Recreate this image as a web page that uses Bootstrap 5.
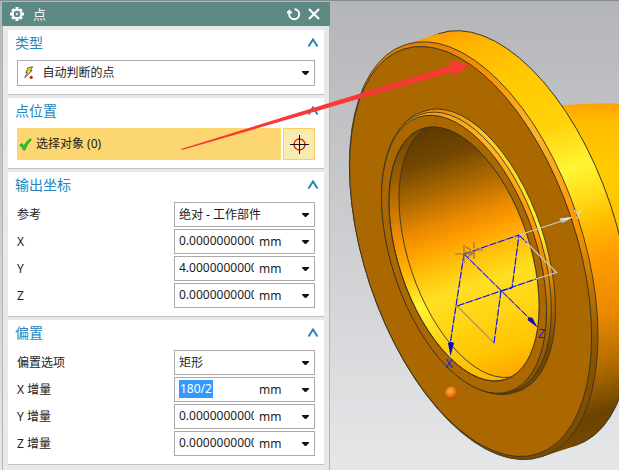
<!DOCTYPE html>
<html lang="zh-CN">
<head>
<meta charset="utf-8">
<meta name="viewport" content="width=device-width, initial-scale=1">
<title>点</title>
<link rel="stylesheet" href="https://cdn.jsdelivr.net/npm/bootstrap@5.3.0/dist/css/bootstrap.min.css">
<style>
  body {
    font: 12px/18px "Noto Sans", "Noto Sans CJK SC", sans-serif;
    color: #1c1c1c;
    background: linear-gradient(#b4b5b8, #e6e7e9);
  }
  .workspace { border-top: 1px solid #858d94; padding: 1px 0 0 2px; }
  .dialog-panel { flex: 0 0 328px; background: #e8e8e8; }
  .panel-inner { border: solid #b4b4b4; border-width: 0 1px; padding: 4px 5px 4px; }
  .title-strip { background: #5c8a83; height: 24px; padding: 0 10px 0 7px; font-size: 13px; color: #f2f6f5; }
  .section-box { background: #fff; border-bottom: 1px solid #c2c2c2; padding: 0 9px 8px; margin-bottom: 3px; }
  .section-head { height: 30px; padding-bottom: 4px; margin: 0 -4px 0 -2px; }
  .section-head h2 { font-size: 14px; line-height: 20px; font-weight: 400; color: #2585b8; }
  .section-rows { display: grid; gap: 2px; }
  .param-row { display: grid; grid-template-columns: minmax(0, 1fr) 141px; align-items: center; }
  .field-box { height: 25px; border: 1px solid #aaa; background: #fff; }
  .field-box select {
    height: 23px; line-height: 18px; padding: 0 20px 0 4px; font-size: 12px; color: #1c1c1c; border-radius: 0;
    background: transparent url("data:image/svg+xml,%3Csvg xmlns='http://www.w3.org/2000/svg' viewBox='0 0 7 4'%3E%3Cpath d='M0 0h7v1L4 4H3L0 1z' fill='%23111'/%3E%3C/svg%3E") no-repeat right 5px center / 7px 4px;
  }
  .field-box input {
    width: 75px; height: 18px; margin: 2px 5px 3px 4px; padding: 0; font-size: 12px; line-height: 18px; color: #1c1c1c; border-radius: 0;
  }
  .field-box input.picked { width: 34px; margin-right: 46px; background: #3399ff; color: #fff; border-left: 1px solid #d87020 !important; }
  .arrow-btn { width: 17px; line-height: 1; }
  .type-field { height: 26px; padding-left: 6px; }
  .type-field select { padding-left: 8px; }
  .pick-row { gap: 2px; }
  .pick-btn { height: 32px; background: #fbd671; padding: 0 2px; color: #1c1c1c; }
  .target-btn { width: 32px; height: 32px; background: #f9ebb0; border: 1px solid #fbd060 !important; }
  .pointer-arrow { top: 0; left: 0; pointer-events: none; }
  .view-area { margin-top: -2px; min-width: 0; overflow: hidden; }
</style>
<script src="https://cdn.jsdelivr.net/npm/bootstrap@5.3.0/dist/js/bootstrap.bundle.min.js"></script>
</head>
<body>
<main class="workspace d-flex min-vh-100 position-relative overflow-hidden">
  <form class="dialog-panel" aria-label="点">
    <header class="title-strip d-flex align-items-center">
      <svg width="16" height="16" viewBox="0 0 16 16" aria-hidden="true">
        <g stroke="#fff" stroke-width="3"><path d="M8 1v14M1 8h14M3.2 3.2l9.6 9.6M12.8 3.2l-9.6 9.6"/></g>
        <circle cx="8" cy="8" r="5.2" fill="#fff"/><circle cx="8" cy="8" r="3.3" fill="#5c8a83"/><circle cx="8" cy="8" r="1.2" fill="#dfe9e7"/>
      </svg>
      <span class="ms-2 flex-grow-1">点</span>
      <button type="button" class="btn p-0 border-0 d-flex me-2" aria-label="重置">
        <svg width="13" height="14" viewBox="0 0 13 14" fill="none" stroke="#fff" stroke-width="1.900"><path d="M7.500 2.200A5 5 0 1 1 2.200 7.500V5M0 6.200l2.300-2.300 2.400 2.300"/></svg>
      </button>
      <button type="button" class="btn p-0 border-0 d-flex" aria-label="关闭">
        <svg width="12" height="12" viewBox="0 0 12 12" stroke="#fff" stroke-width="2.200"><path d="M1 1l10 10M11 1L1 11"/></svg>
      </button>
    </header>

    <div class="panel-inner">
      <section class="section-box">
        <div class="section-head d-flex align-items-center justify-content-between">
          <h2 class="m-0">类型</h2>
          <button type="button" class="btn p-0 border-0 d-flex" aria-label="折叠类型"><svg width="12" height="10" viewBox="0 0 12 10" fill="none" stroke="#2585b8" stroke-width="2"><path d="M1.500 8.500L6 1.500l4.500 7"/></svg></button>
        </div>
        <div class="field-box type-field d-flex align-items-center">
          <svg width="11" height="14" viewBox="0 0 11 14" aria-hidden="true"><path d="M4 1.500L9 .5 6.500 4.500H8.500L.8 12 3.300 6.500H2z" fill="#e8d52a" stroke="#555" stroke-width=".9"/><circle cx="7.500" cy="11.500" r="1.700" fill="#e01818"/></svg>
          <select class="form-select border-0 shadow-none flex-grow-1" aria-label="类型"><option>自动判断的点</option></select>
        </div>
      </section>

      <section class="section-box">
        <div class="section-head d-flex align-items-center justify-content-between">
          <h2 class="m-0">点位置</h2>
          <button type="button" class="btn p-0 border-0 d-flex" aria-label="折叠点位置"><svg width="12" height="10" viewBox="0 0 12 10" fill="none" stroke="#2585b8" stroke-width="2"><path d="M1.500 8.500L6 1.500l4.500 7"/></svg></button>
        </div>
        <div class="pick-row d-flex">
          <button type="button" class="pick-btn border-0 flex-grow-1 d-flex align-items-center">
            <svg width="13" height="13" viewBox="0 0 13 13" aria-hidden="true"><path d="M.8 7l2-1.500L5 8.200C6.500 5 8.500 2.500 11.500.8l.8 1C9.500 4.500 7.500 8 6 12H4.500C3.500 10 2.500 8.500.8 7z" fill="#25c92e" stroke="#119a1b" stroke-width=".8"/></svg>
            <span class="ms-1">选择对象 (0)</span>
          </button>
          <button type="button" class="target-btn p-0 d-flex align-items-center justify-content-center" aria-label="点对话框">
            <svg width="20" height="20" viewBox="0 0 20 20" fill="none"><circle cx="10.500" cy="10.500" r="5.500" stroke="#d81414" stroke-width="1.300"/><path d="M10.500 1v19M1 10.500h19" stroke="#111"/></svg>
          </button>
        </div>
      </section>

      <section class="section-box">
        <div class="section-head d-flex align-items-center justify-content-between">
          <h2 class="m-0">输出坐标</h2>
          <button type="button" class="btn p-0 border-0 d-flex" aria-label="折叠输出坐标"><svg width="12" height="10" viewBox="0 0 12 10" fill="none" stroke="#2585b8" stroke-width="2"><path d="M1.500 8.500L6 1.500l4.500 7"/></svg></button>
        </div>
        <div class="section-rows">
          <div class="param-row"><label for="ref">参考</label><div class="field-box"><select id="ref" class="form-select border-0 shadow-none"><option>绝对 - 工作部件</option></select></div></div>
          <div class="param-row"><label for="cx">X</label><div class="field-box d-flex align-items-center"><input id="cx" type="text" class="border-0" value="0.000000000000"><span class="flex-grow-1">mm</span><button type="button" class="btn border-0 p-0 arrow-btn" aria-label="X 选项"><svg class="d-block mx-auto" width="7" height="4"><path d="M0 0h7v1L4 4H3L0 1z" fill="#111"/></svg></button></div></div>
          <div class="param-row"><label for="cy">Y</label><div class="field-box d-flex align-items-center"><input id="cy" type="text" class="border-0" value="4.000000000000"><span class="flex-grow-1">mm</span><button type="button" class="btn border-0 p-0 arrow-btn" aria-label="Y 选项"><svg class="d-block mx-auto" width="7" height="4"><path d="M0 0h7v1L4 4H3L0 1z" fill="#111"/></svg></button></div></div>
          <div class="param-row"><label for="cz">Z</label><div class="field-box d-flex align-items-center"><input id="cz" type="text" class="border-0" value="0.000000000000"><span class="flex-grow-1">mm</span><button type="button" class="btn border-0 p-0 arrow-btn" aria-label="Z 选项"><svg class="d-block mx-auto" width="7" height="4"><path d="M0 0h7v1L4 4H3L0 1z" fill="#111"/></svg></button></div></div>
        </div>
      </section>

      <section class="section-box">
        <div class="section-head d-flex align-items-center justify-content-between">
          <h2 class="m-0">偏置</h2>
          <button type="button" class="btn p-0 border-0 d-flex" aria-label="折叠偏置"><svg width="12" height="10" viewBox="0 0 12 10" fill="none" stroke="#2585b8" stroke-width="2"><path d="M1.500 8.500L6 1.500l4.500 7"/></svg></button>
        </div>
        <div class="section-rows">
          <div class="param-row"><label for="off">偏置选项</label><div class="field-box"><select id="off" class="form-select border-0 shadow-none"><option>矩形</option></select></div></div>
          <div class="param-row"><label for="dx">X 增量</label><div class="field-box d-flex align-items-center"><input id="dx" type="text" class="border-0 picked" value="180/2"><span class="flex-grow-1">mm</span><button type="button" class="btn border-0 p-0 arrow-btn" aria-label="X 增量选项"><svg class="d-block mx-auto" width="7" height="4"><path d="M0 0h7v1L4 4H3L0 1z" fill="#111"/></svg></button></div></div>
          <div class="param-row"><label for="dy">Y 增量</label><div class="field-box d-flex align-items-center"><input id="dy" type="text" class="border-0" value="0.000000000000"><span class="flex-grow-1">mm</span><button type="button" class="btn border-0 p-0 arrow-btn" aria-label="Y 增量选项"><svg class="d-block mx-auto" width="7" height="4"><path d="M0 0h7v1L4 4H3L0 1z" fill="#111"/></svg></button></div></div>
          <div class="param-row"><label for="dz">Z 增量</label><div class="field-box d-flex align-items-center"><input id="dz" type="text" class="border-0" value="0.000000000000"><span class="flex-grow-1">mm</span><button type="button" class="btn border-0 p-0 arrow-btn" aria-label="Z 增量选项"><svg class="d-block mx-auto" width="7" height="4"><path d="M0 0h7v1L4 4H3L0 1z" fill="#111"/></svg></button></div></div>
        </div>
      </section>
    </div>
  </form>

  <div class="view-area flex-grow-1">
    <svg class="d-block" width="100%" height="470" viewBox="330 0 289 470" preserveAspectRatio="xMinYMin slice" role="img" aria-label="法兰模型">
      <defs>
        <linearGradient id="rim" gradientUnits="userSpaceOnUse" x1="0" y1="0" x2="221" y2="665">
          <stop offset=".24" stop-color="#ff9c00"/><stop offset=".27" stop-color="#ffb400"/><stop offset=".33" stop-color="#ffc800"/><stop offset=".42" stop-color="#ffd20a"/><stop offset=".485" stop-color="#fff535"/><stop offset=".53" stop-color="#ffdc18"/><stop offset=".565" stop-color="#ffc000"/><stop offset=".62" stop-color="#ff9c00"/><stop offset=".7" stop-color="#e88800"/><stop offset=".77" stop-color="#b06a00"/><stop offset=".83" stop-color="#6b4200"/><stop offset=".86" stop-color="#744800"/><stop offset=".88" stop-color="#b06c00"/>
        </linearGradient>
        <linearGradient id="chamfer" gradientUnits="userSpaceOnUse" x1="0" y1="0" x2="221" y2="665">
          <stop offset=".25" stop-color="#e08400"/><stop offset=".31" stop-color="#f39000"/><stop offset=".41" stop-color="#ffb425"/><stop offset=".49" stop-color="#ffa614"/><stop offset=".57" stop-color="#fb9500"/><stop offset=".66" stop-color="#bc7200"/><stop offset=".74" stop-color="#8a5500"/><stop offset=".86" stop-color="#7a4a00"/>
        </linearGradient>
        <linearGradient id="boss" gradientUnits="userSpaceOnUse" x1="0" y1="0" x2="221" y2="665">
          <stop offset=".34" stop-color="#e28a08"/><stop offset=".4" stop-color="#ffc820"/><stop offset=".5" stop-color="#ffe322"/><stop offset=".56" stop-color="#fff035"/><stop offset=".6" stop-color="#ffb010"/><stop offset=".65" stop-color="#b87000"/><stop offset=".72" stop-color="#744600"/>
        </linearGradient>
        <linearGradient id="bore" gradientUnits="userSpaceOnUse" x1="0" y1="0" x2="221" y2="665">
          <stop offset=".37" stop-color="#603b00"/><stop offset=".41" stop-color="#704600"/><stop offset=".46" stop-color="#b06a00"/><stop offset=".505" stop-color="#ee8c00"/><stop offset=".53" stop-color="#ff9f00"/><stop offset=".565" stop-color="#ffc40c"/><stop offset=".6" stop-color="#ffdf22"/><stop offset=".65" stop-color="#ffd412"/><stop offset=".7" stop-color="#ffc400"/><stop offset=".75" stop-color="#ff9e00"/>
        </linearGradient>
        <linearGradient id="lip" gradientUnits="userSpaceOnUse" x1="0" y1="0" x2="221" y2="665">
          <stop offset=".36" stop-color="#704600"/><stop offset=".42" stop-color="#9a5e00"/><stop offset=".5" stop-color="#f08c00"/><stop offset=".55" stop-color="#ffb400"/><stop offset=".605" stop-color="#fff535"/><stop offset=".66" stop-color="#ffd410"/><stop offset=".74" stop-color="#ffb400"/>
        </linearGradient>
        <linearGradient id="pipe" x1="0" y1="0" x2="0" y2="1">
          <stop offset="0" stop-color="#ffa200"/><stop offset=".12" stop-color="#ffbc00"/><stop offset=".5" stop-color="#ffcc00"/><stop offset="1" stop-color="#ffc000"/>
        </linearGradient>
        <radialGradient id="ball" cx=".4" cy=".35" r=".65"><stop offset="0" stop-color="#ffb050"/><stop offset=".5" stop-color="#ef7d10"/><stop offset="1" stop-color="#a84e00"/></radialGradient>
        <linearGradient id="cone" x1="0" y1="0" x2="0" y2="1"><stop offset="0" stop-color="#fff"/><stop offset="1" stop-color="#999"/></linearGradient>
        <path id="boreEdge" d="M422.300 128.700A65.700 132 -18.400 1 1 505.700 379.300A65.700 132 -18.400 1 1 422.300 128.700z"/>
        <clipPath id="inBore"><use href="#boreEdge"/></clipPath>
        <clipPath id="edgeZone"><path d="M535 70H900V400H535z"/></clipPath>
      </defs>
      <path d="M550 105.500L598 103.500H900V240H550z" fill="url(#pipe)"/>
      <g fill="url(#rim)">
        <path d="M438.500 33.700A108.500 217 -18.400 1 1 575.500 445.500A108.500 217 -18.400 1 1 438.500 33.700z" stroke="#3b3424"/>
        <path d="M405.200 44.700L438.500 33.400 575.500 445.800 542.200 456.700z"/>
      </g>
      <ellipse rx="108.500" ry="217" transform="translate(505 240.300) rotate(-18.400)" fill="none" stroke="#6b5313" stroke-width=".8" clip-path="url(#edgeZone)"/>
      <g stroke="#3b3424" stroke-width=".9">
        <path d="M405.200 44.800A108.500 217 -18.400 1 1 542.200 456.600A108.500 217 -18.400 1 1 405.200 44.800z" fill="url(#chamfer)"/>
        <ellipse rx="106" ry="213.200" transform="translate(470.600 251.500) rotate(-18.400)" fill="#ab6700"/>
        <path d="M423 111.600A73.500 147.800 -18.400 1 1 516.200 392A73.500 147.800 -18.400 1 1 423 111.600z" fill="url(#boss)"/>
        <path d="M420.400 114.500A73.300 146 -18.400 1 1 512.600 391.500A73.300 146 -18.400 1 1 420.400 114.500z" fill="url(#chamfer)"/>
        <ellipse rx="72.500" ry="144.500" transform="translate(464 254.300) rotate(-18.400)" fill="#ab6700"/>
        <use href="#boreEdge" fill="url(#lip)"/>
        <g clip-path="url(#inBore)"><path d="M432.300 125.200A65.700 132 -18.400 1 1 515.700 375.800A65.700 132 -18.400 1 1 432.300 125.200z" fill="url(#bore)"/></g>
        <use href="#boreEdge" fill="none"/>
      </g>
      <g fill="none" stroke="#a58b9c" stroke-width="1.200">
        <path d="M464 254L519 235 512 288 501 291 457 306 494 343 501 291M464 254L450 345M464 254L532 321M501 291L536 279M519 235l8 8"/>
        <path d="M464 254L519 235 512 288 501 291 457 306M494 343L501 291M464 254L450 345M464 254L532 321M501 291L536 279M519 235l8 8" stroke="#0808e0" stroke-width="1" stroke-dasharray="7 2"/>
        <path d="M519 235L562 221M527 243L556.500 272.500 536 279" stroke="#d0ccc8"/>
        <path d="M455 254h18M464 245v18M474 242v6M474 253v6M466 247l5 3M468 257l11-9M475 250h8M465 252l8 1" stroke="#9a7048"/>
      </g>
      <path d="M559.500 218.500L573 217 562 223.500z" fill="url(#cone)"/>
      <path d="M448 343q3-2 6 0L450.500 356z" fill="#0808c0"/>
      <path d="M527.500 320q1-4 5-2L537.500 327.500z" fill="#0808c0"/>
      <g font-family="Liberation Sans, sans-serif" font-size="12">
        <text x="574" y="219" fill="#e0dcd4">Y</text>
        <text x="445" y="368" fill="#2418e0">X</text>
        <text x="538" y="338" fill="#2418e0">Z</text>
      </g>
      <circle cx="451.500" cy="393" r="6.500" fill="url(#ball)"/>
    </svg>
  </div>

  <svg class="pointer-arrow position-absolute" width="480" height="160" viewBox="0 1 480 160" aria-hidden="true">
    <path d="M181 149L330 102.800 451 65.800 449.500 60.800 469 64.300 454.500 76 453 71.500 330 107.300 182 150z" fill="#fb3838"/>
  </svg>
</main>
</body>
</html>
